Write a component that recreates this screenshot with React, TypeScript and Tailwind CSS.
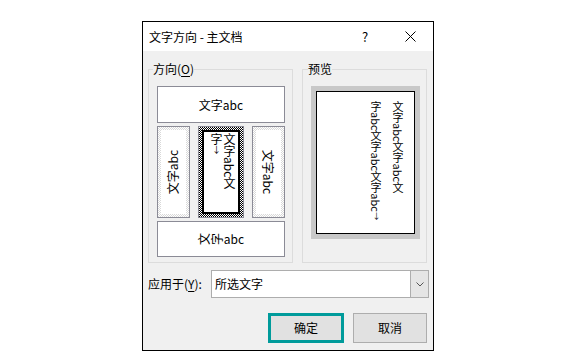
import React from "react";

const FONT = { fontFamily: '"Noto Sans CJK SC", "Noto Sans", sans-serif' };

function Rot({ ch }: { ch: string }) {
  return <span className="inline-block -rotate-90 w-[12px] h-[12px] leading-[12px] mr-[1px]">{ch}</span>;
}

function U({ children }: { children: React.ReactNode }) {
  return <span className="[text-orientation:upright]">{children}</span>;
}

export default function App() {
  return (
    <div className="w-[576px] h-[360px] bg-white pt-[21px] pl-[142px]" style={FONT}>
      <div className="w-[292px] h-[330px] border border-black flex flex-col text-[12px] text-black">
        {/* Title bar */}
        <div className="h-[29px] bg-white flex items-center shrink-0">
          <div className="pl-[6px] leading-[14px] flex-1">文字方向 - 主文档</div>
          <div className="w-[44px] flex justify-center text-[13px] leading-[14px]">?</div>
          <div className="w-[46px] flex justify-center">
            <svg width="11" height="11" viewBox="0 0 11 11">
              <path d="M0.5 0.5 L10.5 10.5 M10.5 0.5 L0.5 10.5" stroke="#000" strokeWidth="1" fill="none" />
            </svg>
          </div>
        </div>

        {/* Body */}
        <div className="flex-1 bg-[#f0f0f0] pl-[5px] flex flex-col">
          <div className="flex gap-[9px] mt-[11px]">
            {/* Direction group */}
            <fieldset className="w-[145px] border border-[#dcdcdc] m-0 p-0">
              <legend className="ml-[4px] p-0 leading-[14px]">
                方向(<span className="underline underline-offset-2">O</span>)
              </legend>
              <div className="pl-[8px] pt-[10px] pb-[5px] flex flex-col gap-[3px]">
                <div className="w-[128px] h-[37px] border border-[#8b8b96] bg-white flex items-center justify-center leading-[14px]">
                  文字abc
                </div>
                <div className="flex gap-[8px] h-[92px]">
                  <div className="w-[33px] border border-[#8b8b96] p-[3px] bg-[repeating-conic-gradient(#d9d9d9_0%_25%,#ffffff_0%_50%)] [background-size:2px_2px]">
                    <div className="w-full h-full bg-white flex items-center justify-center">
                      <span className="inline-block -rotate-90 whitespace-nowrap leading-[14px]">文字abc</span>
                    </div>
                  </div>
                  <div className="w-[46px] border border-[#8b8b96] p-[3px] bg-[repeating-conic-gradient(#000000_0%_25%,#ffffff_0%_50%)] [background-size:2px_2px]">
                    <div className="w-full h-full bg-white border-2 border-black pr-[2px] pt-[1px] flex justify-end">
                      <div className="[writing-mode:vertical-rl] [text-orientation:mixed] leading-[13px] text-[12px]">
                        <U>文字</U>abc<U>文</U>
                        <br />
                        <U>字</U>
                        <span className="[text-orientation:upright] text-[9px]">↓</span>
                      </div>
                    </div>
                  </div>
                  <div className="w-[33px] border border-[#8b8b96] p-[3px] bg-[repeating-conic-gradient(#d9d9d9_0%_25%,#ffffff_0%_50%)] [background-size:2px_2px]">
                    <div className="w-full h-full bg-white flex items-center justify-center">
                      <span className="inline-block rotate-90 whitespace-nowrap leading-[14px]">文字abc</span>
                    </div>
                  </div>
                </div>
                <div className="w-[128px] h-[36px] border border-[#8b8b96] bg-white flex items-center justify-center leading-[14px]">
                  <Rot ch="文" />
                  <Rot ch="字" />
                  <span>abc</span>
                </div>
              </div>
            </fieldset>

            {/* Preview group */}
            <fieldset className="w-[125px] border border-[#dcdcdc] m-0 p-0">
              <legend className="ml-[5px] p-0 leading-[14px]">预览</legend>
              <div className="pl-[8px] pt-[10px]">
                <div className="w-[109px] h-[153px] bg-[#c8c8c8] p-[5px]">
                  <div className="w-full h-full bg-white border border-black flex justify-end pr-[5px] pt-[9px]">
                    <div className="[writing-mode:vertical-rl] [text-orientation:mixed] leading-[22px] text-[11px]">
                      <U>文字</U>abc<U>文字</U>abc<U>文</U>
                      <br />
                      <U>字</U>abc<U>文字</U>abc<U>文字</U>abc
                      <span className="[text-orientation:upright] text-[8px]">↓</span>
                    </div>
                  </div>
                </div>
              </div>
            </fieldset>
          </div>

          {/* Apply to */}
          <div className="flex items-center mt-[7px]">
            <div className="w-[63px] leading-[14px]">
              应用于(<span className="underline underline-offset-2">Y</span>):
            </div>
            <div className="w-[218px] h-[28px] border border-[#adadad] bg-white flex">
              <div className="flex-1 flex items-center pl-[3px] leading-[14px]">所选文字</div>
              <div className="w-[18px] bg-[#e5e5e5] border-l border-[#adadad] flex items-center justify-center">
                <svg width="8" height="5" viewBox="0 0 8 5">
                  <path d="M0.5 0.5 L4 4 L7.5 0.5" stroke="#555" strokeWidth="1" fill="none" />
                </svg>
              </div>
            </div>
          </div>

          {/* Buttons */}
          <div className="flex mt-[15px] pl-[120px] gap-[9px]">
            <div className="w-[76px] h-[30px] border-[3px] border-[#009b9b] bg-[#e1e1e1] flex items-center justify-center leading-[14px]">
              确定
            </div>
            <div className="w-[74px] h-[30px] border border-[#adadad] bg-[#e1e1e1] flex items-center justify-center leading-[14px]">
              取消
            </div>
          </div>
        </div>
      </div>
    </div>
  );
}
